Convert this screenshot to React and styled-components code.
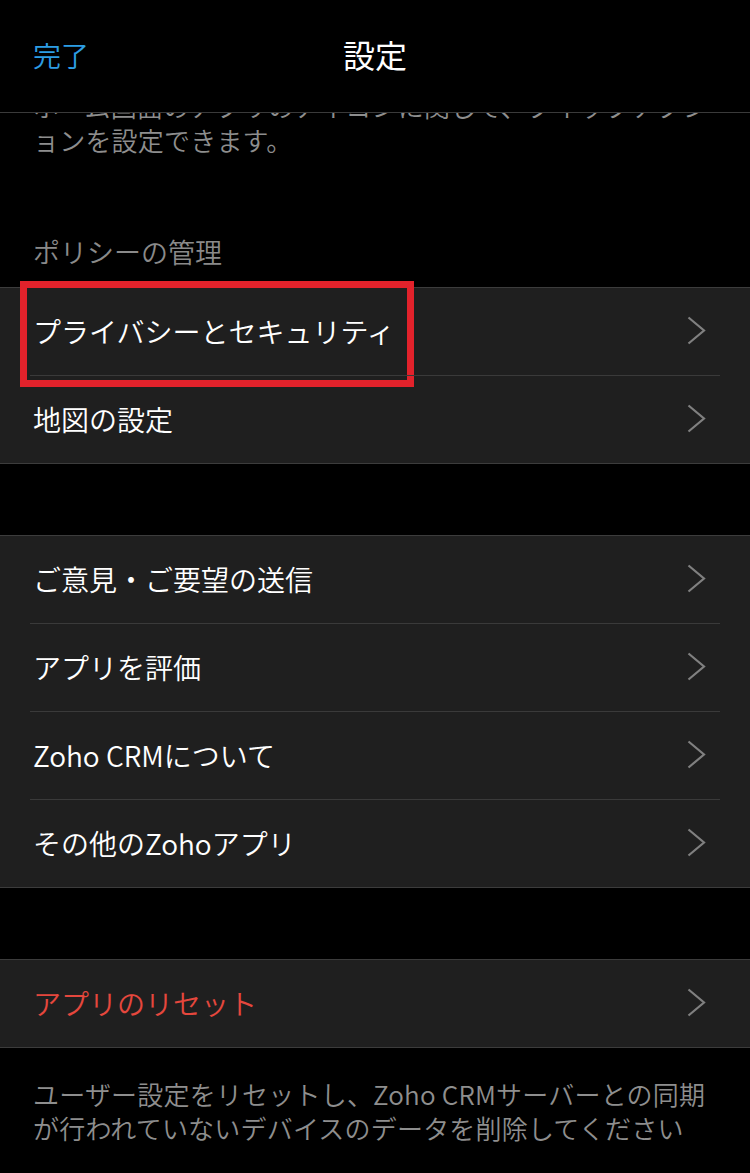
import React from "react";
import styled, { createGlobalStyle } from "styled-components";

const Global = createGlobalStyle`
  html, body { margin: 0; padding: 0; background: #000; }
  body { font-family: "Noto Sans CJK JP", "Noto Sans", sans-serif; }
  * { box-sizing: border-box; }
`;

const Screen = styled.div`
  width: 750px;
  height: 1173px;
  background: #000;
  display: flex;
  flex-direction: column;
  overflow: hidden;
`;

const NavBar = styled.header`
  position: relative;
  z-index: 2;
  flex: 0 0 113px;
  height: 113px;
  background: #000;
  border-bottom: 1px solid #3a3a3a;
  display: grid;
  grid-template-columns: 1fr auto 1fr;
  align-items: center;
  padding: 0 33px 2px;
`;

const NavButton = styled.span`
  font-size: 28px;
  font-weight: 350;
  color: #2d9de4;
  justify-self: start;
  line-height: 1;
`;

const NavTitle = styled.h1`
  margin: 0;
  font-size: 32px;
  font-weight: 400;
  color: #fff;
  line-height: 1;
  transform: translateY(-1px);
`;

const Content = styled.main`
  flex: 1;
  overflow: hidden;
  display: flex;
  flex-direction: column;
`;

const Note = styled.p`
  margin: ${(p) => p.$top || "0"} 0 0;
  padding: 0 33px;
  font-size: 26px;
  font-weight: 350;
  line-height: 34px;
  color: #8e8e8e;
  letter-spacing: 0.2px;
`;

const SectionHeader = styled.div`
  margin-top: 78px;
  padding: 0 33px 18px;
  font-size: 27px;
  font-weight: 350;
  line-height: 34px;
  color: #8a8a8a;
`;

const Group = styled.section`
  background: #1f1f1f;
  border-top: 1px solid #3c3c3c;
  border-bottom: 1px solid #3c3c3c;
  margin-top: ${(p) => p.$gap || "0"};
`;

const Row = styled.div`
  position: relative;
  height: 87px;
  display: flex;
  align-items: center;
  justify-content: space-between;
  padding: 0 44px 2px 33px;
  & + & {
    height: 88px;
    border-top: 1px solid transparent;
  }
  & + &::before {
    content: "";
    position: absolute;
    top: -1px;
    left: 30px;
    right: 30px;
    height: 1px;
    background: #3a3a3a;
  }
`;

const Label = styled.span`
  font-size: 28px;
  font-weight: 350;
  color: ${(p) => (p.$danger ? "#e5473d" : "#ffffff")};
  line-height: 1;
`;

const Highlight = styled.div`
  position: absolute;
  left: 20px;
  top: -7px;
  width: 394px;
  height: 106px;
  border: 7px solid #e2222b;
  pointer-events: none;
`;

const Chevron = () => (
  <svg width="19" height="29" viewBox="0 0 19 29" fill="none">
    <path d="M1.5 1.5 L17 14.5 L1.5 27.5" stroke="#808080" strokeWidth="2.2" />
  </svg>
);

const Cell = ({ children, danger, highlighted }) => (
  <Row>
    <Label $danger={danger}>{children}</Label>
    <Chevron />
    {highlighted && <Highlight />}
  </Row>
);

export default function App() {
  return (
    <Screen>
      <Global />
      <NavBar>
        <NavButton>完了</NavButton>
        <NavTitle>設定</NavTitle>
        <span />
      </NavBar>
      <Content>
        <Note $top="-24px">
          ホーム画面のアプリのアイコンに関して、クイックアクションを設定できます。
        </Note>
        <SectionHeader>ポリシーの管理</SectionHeader>
        <Group>
          <Cell highlighted>プライバシーとセキュリティ</Cell>
          <Cell>地図の設定</Cell>
        </Group>
        <Group $gap="71px">
          <Cell>ご意見・ご要望の送信</Cell>
          <Cell>アプリを評価</Cell>
          <Cell>Zoho CRMについて</Cell>
          <Cell>その他のZohoアプリ</Cell>
        </Group>
        <Group $gap="71px">
          <Cell danger>アプリのリセット</Cell>
        </Group>
        <Note $top="29px">
          ユーザー設定をリセットし、Zoho CRMサーバーとの同期が行われていないデバイスのデータを削除してください
        </Note>
      </Content>
    </Screen>
  );
}
